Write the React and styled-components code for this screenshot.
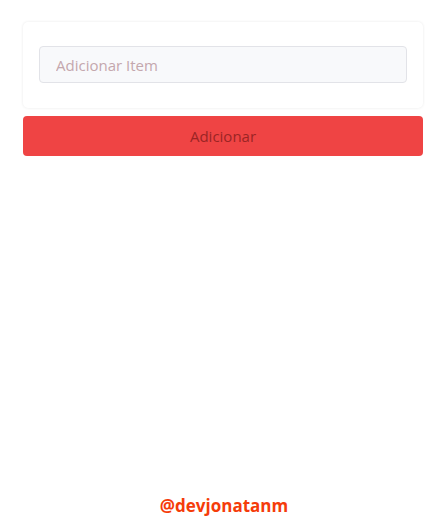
import React, { useState } from 'react';
import styled, { createGlobalStyle } from 'styled-components';

const GlobalStyle = createGlobalStyle`
  html, body {
    margin: 0;
    padding: 0;
    background: #ffffff;
    font-family: "Open Sans", "Noto Sans", sans-serif;
  }
`;

function App() {
  const [item, setItem] = useState('');

  return (
    <Page>
      <GlobalStyle />
      <Main>
        <Card>
          <Input
            placeholder="Adicionar Item"
            value={item}
            onChange={(e) => setItem(e.target.value)}
          />
        </Card>
        <AddButton type="button">Adicionar</AddButton>
      </Main>
      <Footer>@devjonatanm</Footer>
    </Page>
  );
}

const Page = styled.div`
  display: flex;
  flex-direction: column;
  height: 521px;
  box-sizing: border-box;
  padding: 22px 21px 0 23px;
`;

const Main = styled.div`
  display: flex;
  flex-direction: column;
  gap: 8px;
  flex: 1;
`;

const Card = styled.div`
  background: #ffffff;
  border-radius: 5px;
  padding: 24px 16px 25px;
  box-shadow: 0 0 3px rgba(0, 0, 0, 0.09);
`;

const Input = styled.input`
  display: block;
  width: 100%;
  box-sizing: border-box;
  height: 37px;
  padding: 0 16px;
  border: 1px solid #e2e3e8;
  border-radius: 4px;
  background: #f8f9fb;
  font-family: inherit;
  font-size: 15px;
  color: #333;
  outline: none;

  &::placeholder {
    color: #c4a7ad;
  }
`;

const AddButton = styled.button`
  height: 40px;
  border: none;
  border-radius: 4px;
  background: #ef4444;
  color: #9b2424;
  font-family: inherit;
  font-size: 15px;
  cursor: pointer;
`;

const Footer = styled.footer`
  text-align: center;
  padding: 0 0 4px 2px;
  font-family: "Open Sans", sans-serif;
  font-weight: 700;
  font-size: 17px;
  color: #f53c0a;
`;

export default App;
